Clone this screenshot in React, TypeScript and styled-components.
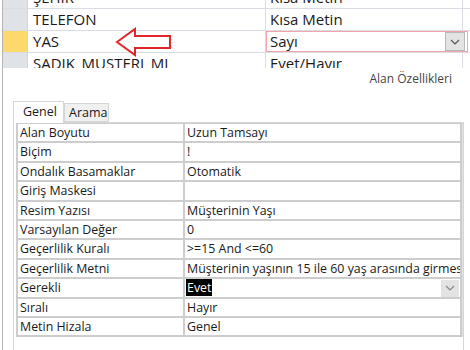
import React from "react";
import styled, { createGlobalStyle } from "styled-components";

const GlobalStyle = createGlobalStyle`
  html, body {
    margin: 0;
    padding: 0;
    background: #ffffff;
  }
  body {
    font-family: "Open Sans", "Noto Sans", "Liberation Sans", sans-serif;
  }
`;

const Screen = styled.div`
  width: 468px;
  height: 350px;
  margin-left: 2px;
  border-left: 1px solid #b4b4b4;
  background: #ffffff;
  overflow: hidden;
  display: flex;
  flex-direction: column;
`;

/* ---- upper field grid ---- */

const FieldGrid = styled.div`
  position: relative;
  height: 68px;
  overflow: hidden;
  flex-shrink: 0;
`;

const FieldRows = styled.div`
  margin-top: -13px;
  display: flex;
  flex-direction: column;
`;

const FieldRow = styled.div`
  display: grid;
  grid-template-columns: 25px 238px 197px;
  height: 22px;
  border-bottom: 1px solid #d9dde3;
  box-sizing: border-box;
`;

const Selector = styled.div<{ $active?: boolean }>`
  background: ${({ $active }) => ($active ? "#fcd96a" : "#dfe3e8")};
  border-right: 1px solid #cfd4db;
`;

const FieldName = styled.div`
  padding-left: 5px;
  font-size: 15px;
  line-height: 21px;
  color: #1a1a1a;
  border-right: 1px solid #d9dde3;
  white-space: nowrap;
`;

const FieldType = styled.div<{ $focused?: boolean }>`
  position: relative;
  padding-left: 4px;
  font-size: 15px;
  line-height: 21px;
  color: #1a1a1a;
  border-right: 1px solid #d9dde3;
  white-space: nowrap;
  ${({ $focused }) =>
    $focused &&
    `
    outline: 1px solid #f2a3ab;
    outline-offset: -1px;
    margin-right: -5px;
  `}
`;

const DropButton = styled.div<{ $small?: boolean }>`
  position: absolute;
  right: ${({ $small }) => ($small ? "1px" : "2px")};
  top: 1px;
  bottom: ${({ $small }) => ($small ? "0" : "1px")};
  width: ${({ $small }) => ($small ? "18px" : "20px")};
  background: #e3e3e3;
  border: 1px solid ${({ $small }) => ($small ? "#e3e3e3" : "#b9b9b9")};
  box-sizing: border-box;
  display: flex;
  align-items: center;
  justify-content: center;
`;

const ArrowMark = styled.svg`
  position: absolute;
  left: 112px;
  top: 27px;
`;

/* ---- caption ---- */

const Caption = styled.div`
  height: 33px;
  padding: 2px 19px 0 0;
  box-sizing: border-box;
  display: flex;
  justify-content: flex-end;
  align-items: flex-start;
  font-size: 12px;
  line-height: 17px;
  color: #444444;
  flex-shrink: 0;
`;

/* ---- tabs ---- */

const TabBar = styled.div`
  display: flex;
  align-items: flex-end;
  padding-left: 10px;
  height: 21px;
  flex-shrink: 0;
`;

const Tab = styled.div<{ $active?: boolean }>`
  box-sizing: border-box;
  height: ${({ $active }) => ($active ? "22px" : "19px")};
  padding: 0 ${({ $active }) => ($active ? "9px" : "4px")};
  width: ${({ $active }) => ($active ? "51px" : "45px")};
  margin-bottom: ${({ $active }) => ($active ? "-1px" : "0")};
  background: ${({ $active }) => ($active ? "#ffffff" : "#f0f0f0")};
  border: 1px solid #d6d6d6;
  border-bottom: ${({ $active }) => ($active ? "none" : "1px solid #d6d6d6")};
  font-size: 12.5px;
  line-height: ${({ $active }) => ($active ? "20px" : "18px")};
  color: #1a1a1a;
  position: relative;
  z-index: 1;
`;

const TabPage = styled.div`
  flex: 1;
  margin-left: 10px;
  width: 451px;
  box-sizing: border-box;
  border: 1px solid #d6d6d6;
  border-bottom: none;
  padding: 0 2px 0 2px;
`;

const PropGrid = styled.div`
  display: grid;
  grid-template-columns: 165px 275px;
  grid-auto-rows: 17.4px;
  gap: 2px;
  padding: 1px 2px 2px 2px;
  background: #cdcdcd;
  border-right: 1px solid #e0e0e0;
  box-sizing: border-box;
  width: 447px;
`;

const Cell = styled.div`
  position: relative;
  background: #ffffff;
  font-size: 12.4px;
  line-height: 17px;
  color: #1a1a1a;
  padding-left: 2px;
  white-space: nowrap;
  overflow: hidden;
`;

const Selected = styled.span`
  background: #000000;
  color: #ffffff;
  padding: 0 1px;
  margin-left: -1px;
`;

const Highlight = styled.div`
  position: absolute;
  left: -5px;
  top: -3px;
  width: 206px;
  height: 19px;
  border: 2px solid #e0262b;
  border-radius: 6px;
  pointer-events: none;
  z-index: 2;
`;

const Chevron = ({ color = "#555" }: { color?: string }) => (
  <svg width="10" height="6" viewBox="0 0 10 6">
    <path d="M1 1 L5 5 L9 1" fill="none" stroke={color} strokeWidth="1.2" />
  </svg>
);

const fields = [
  { name: "ŞEHİR", type: "Kısa Metin" },
  { name: "TELEFON", type: "Kısa Metin" },
  { name: "YAS", type: "Sayı", active: true },
  { name: "SADIK_MUSTERI_MI", type: "Evet/Hayır" },
];

const props = [
  ["Alan Boyutu", "Uzun Tamsayı"],
  ["Biçim", "!"],
  ["Ondalık Basamaklar", "Otomatik"],
  ["Giriş Maskesi", ""],
  ["Resim Yazısı", "Müşterinin Yaşı"],
  ["Varsayılan Değer", "0"],
  ["Geçerlilik Kuralı", ">=15 And <=60"],
  ["Geçerlilik Metni", "Müşterinin yaşının 15 ile 60 yaş arasında girmesi gerekir"],
  ["Gerekli", "Evet"],
  ["Sıralı", "Hayır"],
  ["Metin Hizala", "Genel"],
];

export default function App() {
  return (
    <>
      <GlobalStyle />
      <Screen>
        <FieldGrid>
          <FieldRows>
            {fields.map((f) => (
              <FieldRow key={f.name}>
                <Selector $active={f.active} />
                <FieldName>{f.name}</FieldName>
                <FieldType $focused={f.active}>
                  {f.type}
                  {f.active && (
                    <DropButton>
                      <Chevron />
                    </DropButton>
                  )}
                </FieldType>
              </FieldRow>
            ))}
          </FieldRows>
          <ArrowMark width="58" height="30" viewBox="0 0 58 30">
            <path
              d="M2 15 L20 2 L20 9 L55 9 L55 21 L20 21 L20 28 Z"
              fill="#ffffff"
              stroke="#e0262b"
              strokeWidth="2"
              strokeLinejoin="miter"
            />
          </ArrowMark>
        </FieldGrid>

        <Caption>Alan Özellikleri</Caption>

        <TabBar>
          <Tab $active>Genel</Tab>
          <Tab>Arama</Tab>
        </TabBar>

        <TabPage>
          <PropGrid>
            {props.map(([label, value]) => (
              <React.Fragment key={label}>
                <Cell>
                  {label}
                  {label === "Gerekli" && <Highlight />}
                </Cell>
                <Cell>
                  {label === "Gerekli" ? <Selected>{value}</Selected> : value}
                  {label === "Gerekli" && (
                    <DropButton $small>
                      <Chevron color="#888" />
                    </DropButton>
                  )}
                </Cell>
              </React.Fragment>
            ))}
          </PropGrid>
        </TabPage>
      </Screen>
    </>
  );
}
